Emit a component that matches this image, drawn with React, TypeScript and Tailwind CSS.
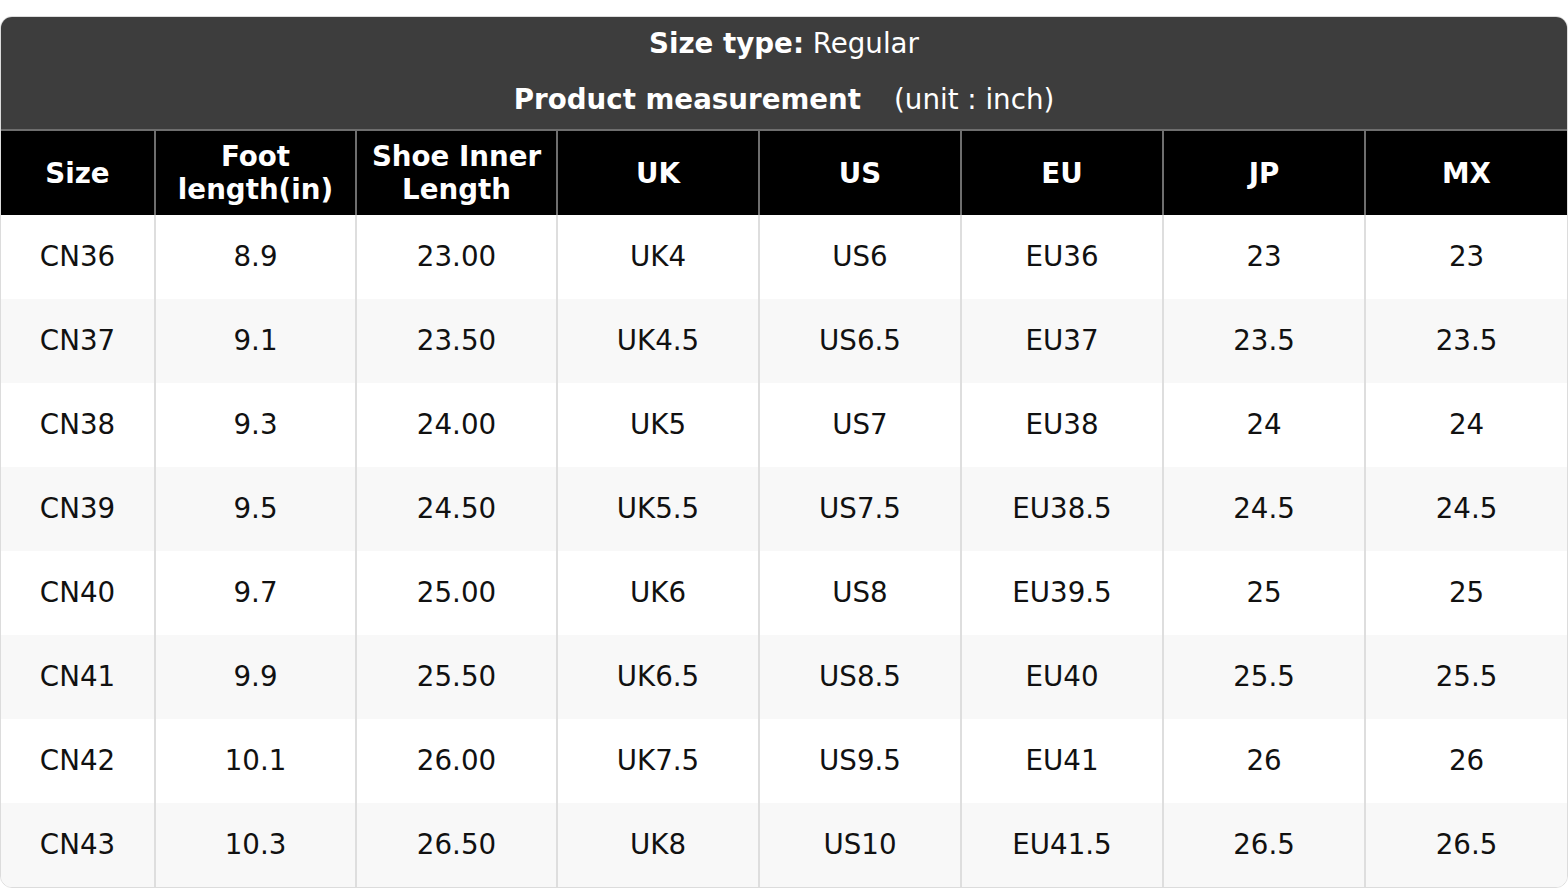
import React from "react";

const rows = [
  ["CN36", "8.9", "23.00", "UK4", "US6", "EU36", "23", "23"],
  ["CN37", "9.1", "23.50", "UK4.5", "US6.5", "EU37", "23.5", "23.5"],
  ["CN38", "9.3", "24.00", "UK5", "US7", "EU38", "24", "24"],
  ["CN39", "9.5", "24.50", "UK5.5", "US7.5", "EU38.5", "24.5", "24.5"],
  ["CN40", "9.7", "25.00", "UK6", "US8", "EU39.5", "25", "25"],
  ["CN41", "9.9", "25.50", "UK6.5", "US8.5", "EU40", "25.5", "25.5"],
  ["CN42", "10.1", "26.00", "UK7.5", "US9.5", "EU41", "26", "26"],
  ["CN43", "10.3", "26.50", "UK8", "US10", "EU41.5", "26.5", "26.5"],
];

const heads: React.ReactNode[] = [
  "Size",
  <>Foot<br />length(in)</>,
  <>Shoe Inner<br />Length</>,
  "UK",
  "US",
  "EU",
  "JP",
  "MX",
];

export default function App() {
  return (
    <div
      className="w-[1568px] h-[888px] bg-white pt-[16px]"
      style={{ fontFamily: '"DejaVu Sans", sans-serif' }}
    >
      <div className="w-full rounded-[12px] border border-[#dcdcdc] overflow-hidden text-[27.7px]">
        <div className="bg-[#3d3d3d] text-white text-center pt-[10px] pb-[12px]">
          <div className="leading-[34px]">
            <span className="font-bold">Size type:</span> Regular
          </div>
          <div className="leading-[34px] mt-[22px]">
            <span className="font-bold">Product measurement</span>
            <span className="ml-[33px]">(unit : inch)</span>
          </div>
        </div>
        <div className="h-[2px] bg-[#6e6e6e]" />
        <div className="grid grid-cols-[153px_201px_201px_202px_202px_202px_202px_1fr] bg-black text-white font-bold">
          {heads.map((h, i) => (
            <div
              key={i}
              className={`h-[84px] flex items-center justify-center text-center leading-[33px] ${
                i > 0 ? "border-l-2 border-[#6e6e6e]" : ""
              }`}
            >
              <div>{h}</div>
            </div>
          ))}
        </div>
        {rows.map((r, ri) => (
          <div
            key={ri}
            className={`grid grid-cols-[153px_201px_201px_202px_202px_202px_202px_1fr] text-[#111] ${
              ri % 2 === 1 ? "bg-[#f8f8f8]" : "bg-white"
            }`}
          >
            {r.map((c, ci) => (
              <div
                key={ci}
                className={`h-[84px] flex items-center justify-center ${
                  ci > 0 ? "border-l-2 border-[#dedede]" : ""
                }`}
              >
                {c}
              </div>
            ))}
          </div>
        ))}
      </div>
    </div>
  );
}
